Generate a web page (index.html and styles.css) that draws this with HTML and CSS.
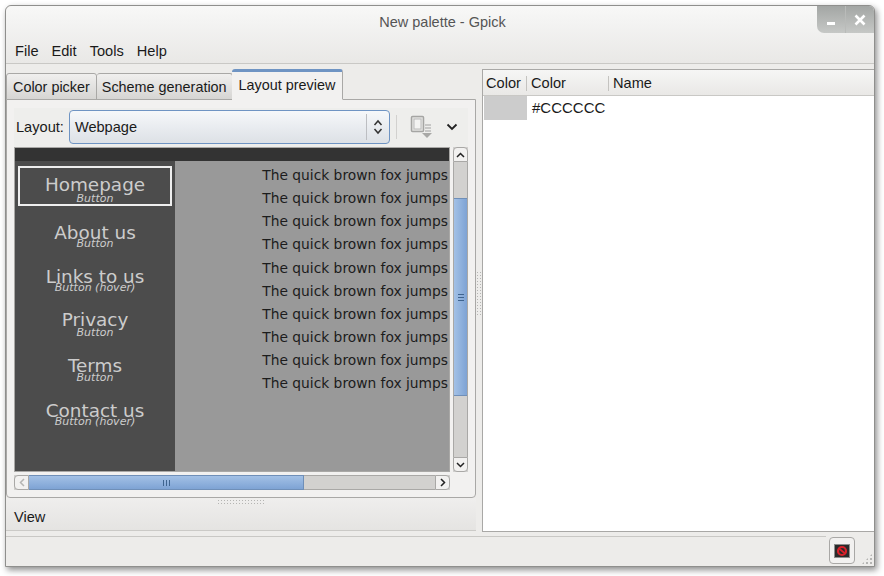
FILE: index.html
```html
<!DOCTYPE html>
<html>
<head>
    <meta charset="utf-8">
    <title>New palette - Gpick</title>
    <link rel="stylesheet" href="styles.css">
</head>
<body>
    <div class="window">
        <div class="chrome">
            <div class="titlebar">
                <span class="title">New palette - Gpick</span>
                <div class="winbtns">
                    <div class="winbtn"><svg width="14" height="12" viewBox="0 0 14 12"><rect x="3" y="8" width="8" height="3" fill="#fff"/></svg></div>
                    <div class="winbtn"><svg width="14" height="12" viewBox="0 0 14 12"><path d="M2.5 1.5 L11.5 10.5 M11.5 1.5 L2.5 10.5" stroke="#fff" stroke-width="2.6"/></svg></div>
                </div>
            </div>
            <div class="menubar">
                <span>File</span><span>Edit</span><span>Tools</span><span>Help</span>
            </div>
        </div>

        <div class="main">
            <div class="left">
                <div class="tabs">
                    <div class="tab tab-first">Color picker</div>
                    <div class="tab">Scheme generation</div>
                    <div class="tab tab-active">Layout preview</div>
                </div>
                <div class="notebook">
                    <div class="toolbar">
                        <span class="toolbar-label">Layout:</span>
                        <div class="combo">
                            <span class="combo-text">Webpage</span>
                            <div class="combo-arrows">
                                <svg width="10" height="16" viewBox="0 0 10 16"><path d="M1.5 6 L5 2 L8.5 6 M1.5 10 L5 14 L8.5 10" fill="none" stroke="#333" stroke-width="1.5"/></svg>
                            </div>
                        </div>
                        <div class="toolbar-sep"></div>
                        <svg class="export-icon" width="24" height="24" viewBox="0 0 24 24">
                            <rect x="1.5" y="1.5" width="12" height="15" rx="1" fill="#e4e4e2" stroke="#a5a5a3" stroke-width="1.5"/>
                            <rect x="4" y="4" width="7" height="10" fill="#f3f3f2" stroke="#bbb"/>
                            <path d="M15 10 H21 M15 13 H21 M15 16 H21" stroke="#a0a0a0" stroke-width="1.2"/>
                            <path d="M12 18 H22 L17 23 Z" fill="#a8a8a6"/>
                        </svg>
                        <svg class="more-icon" width="12" height="8" viewBox="0 0 12 8"><path d="M1.5 1.5 L6 6 L10.5 1.5" fill="none" stroke="#222" stroke-width="1.8"/></svg>
                    </div>
                    <div class="preview-grid">
                        <div class="preview">
                            <div class="preview-top"></div>
                            <div class="preview-body">
                                <div class="side">
                                    <div class="nav nav-home"><div class="nav-name">Homepage</div><div class="nav-sub">Button</div></div>
                                    <div class="nav nav-about"><div class="nav-name">About us</div><div class="nav-sub">Button</div></div>
                                    <div class="nav nav-links"><div class="nav-name">Links to us</div><div class="nav-sub">Button (hover)</div></div>
                                    <div class="nav nav-privacy"><div class="nav-name">Privacy</div><div class="nav-sub">Button</div></div>
                                    <div class="nav nav-terms"><div class="nav-name">Terms</div><div class="nav-sub">Button</div></div>
                                    <div class="nav nav-contact"><div class="nav-name">Contact us</div><div class="nav-sub">Button (hover)</div></div>
                                </div>
                                <div class="content">
                                    <div>The quick brown fox jumps</div>
                                    <div>The quick brown fox jumps</div>
                                    <div>The quick brown fox jumps</div>
                                    <div>The quick brown fox jumps</div>
                                    <div>The quick brown fox jumps</div>
                                    <div>The quick brown fox jumps</div>
                                    <div>The quick brown fox jumps</div>
                                    <div>The quick brown fox jumps</div>
                                    <div>The quick brown fox jumps</div>
                                    <div>The quick brown fox jumps</div>
                                </div>
                            </div>
                        </div>
                        <div class="vscroll">
                            <div class="sb-btn sb-up"><svg width="9" height="6" viewBox="0 0 9 6"><path d="M1 5 L4.5 1.5 L8 5" fill="none" stroke="#222" stroke-width="1.5"/></svg></div>
                            <div class="vtrack">
                                <div class="vthumb"><svg width="6" height="7" viewBox="0 0 6 7"><path d="M0 .5 H6 M0 3.5 H6 M0 6.5 H6" stroke="#3f648f"/></svg></div>
                            </div>
                            <div class="sb-btn sb-down"><svg width="9" height="6" viewBox="0 0 9 6"><path d="M1 1 L4.5 4.5 L8 1" fill="none" stroke="#222" stroke-width="1.5"/></svg></div>
                        </div>
                        <div class="hscroll">
                            <div class="sb-btn sb-left"><svg width="6" height="9" viewBox="0 0 6 9"><path d="M5 1 L1.5 4.5 L5 8" fill="none" stroke="#b5b5b3" stroke-width="1.5"/></svg></div>
                            <div class="hthumb"><svg width="7" height="6" viewBox="0 0 7 6"><path d="M.5 0 V6 M3.5 0 V6 M6.5 0 V6" stroke="#3f648f"/></svg></div>
                            <div class="htrack"></div>
                            <div class="sb-btn sb-right"><svg width="6" height="9" viewBox="0 0 6 9"><path d="M1 1 L4.5 4.5 L1 8" fill="none" stroke="#222" stroke-width="1.5"/></svg></div>
                        </div>
                    </div>
                </div>
                <div class="expander">
                    <div class="grip-h"></div>
                    <span>View</span>
                </div>
            </div>

            <div class="divider"><div class="grip-v"></div></div>

            <div class="right">
                <div class="list-head">
                    <div class="col col-a">Color</div>
                    <div class="col col-b">Color</div>
                    <div class="col col-c">Name</div>
                </div>
                <div class="list-row">
                    <div class="swatch"></div>
                    <div class="hex">#CCCCCC</div>
                </div>
            </div>
        </div>

        <div class="statusbar">
            <div class="status-line"></div>
            <div class="status-btn">
                <svg width="16" height="14" viewBox="0 0 16 14">
                    <rect x=".5" y=".5" width="15" height="13" fill="#2a2a2a" stroke="#8d8d8d"/>
                    <circle cx="8" cy="7" r="4" fill="none" stroke="#d8202a" stroke-width="2.2"/>
                    <path d="M5 4.5 L11 9.5" stroke="#d8202a" stroke-width="1.8"/>
                </svg>
            </div>
            <div class="resize-grip"></div>
        </div>
    </div>

    <!-- mouse pointer sitting over the palette list -->
    <svg class="cursor" width="16" height="22" viewBox="0 0 16 22">
        <path d="M1 1 L1 17 L5 13.5 L8 20 L10.5 19 L7.8 12.8 L13 12.5 Z" fill="#111" stroke="#eee" stroke-width=".8"/>
    </svg>
</body>
</html>
```

FILE: styles.css
```css
html,
body {
    margin: 0;
    height: 100%;
    background: #fff;
}
body {
    position: relative;
    width: 884px;
    height: 576px;
    overflow: hidden;
    font-family: "Liberation Sans", Arial, sans-serif;
    font-size: 14.6px;
    color: #1a1a1a;
}

.window {
    display: flex;
    flex-direction: column;
    box-sizing: border-box;
    width: 870px;
    height: 562px;
    margin: 5px 0 0 5px;
    background: #edecea;
    border: 1px solid #8f8f8d;
    border-radius: 6px 6px 0 0;
    box-shadow: 2px 3px 6px rgba(0, 0, 0, 0.45);
}

/* title and menu share one gradient */
.chrome {
    border-bottom: 1px solid #c9c8c5;
    background: linear-gradient(#f8f8f7, #f3f3f2 30%, #e9e8e6);
    border-radius: 6px 6px 0 0;
}
.titlebar {
    position: relative;
    box-sizing: border-box;
    height: 31px;
    padding-left: 5px;
    display: flex;
    align-items: center;
    justify-content: center;
}
.title {
    font-size: 14.5px;
    color: #555;
}
.winbtns {
    position: absolute;
    top: 0;
    right: 0;
    display: flex;
    height: 27px;
    background: linear-gradient(#a3a6a4, #c6c8c6);
    border-radius: 0 5px 0 7px;
}
.winbtn {
    width: 28px;
    display: flex;
    align-items: center;
    justify-content: center;
    border-left: 1px solid #b9bbb9;
}
.winbtn:first-child {
    border-left: 0;
}
.menubar {
    box-sizing: border-box;
    display: flex;
    gap: 13px;
    height: 26px;
    padding: 2px 9px 0;
    align-items: center;
}

.main {
    flex: 1;
    display: flex;
    min-height: 0;
}
.left {
    width: 470px;
    display: flex;
    flex-direction: column;
    padding-top: 5px;
}

.tabs {
    display: flex;
    align-items: flex-end;
    height: 31px;
    margin-bottom: -1px;
    position: relative;
    z-index: 1;
    font-size: 14.4px;
}
.tab {
    box-sizing: border-box;
    height: 27px;
    padding: 2px 5px 0;
    line-height: 22px;
    background: linear-gradient(#f0efee, #d6d5d3);
    border: 1px solid #a9a8a6;
    border-left: 0;
    border-radius: 3px 3px 0 0;
}
.tab-first {
    border-left: 1px solid #a9a8a6;
    padding-left: 6px;
    padding-right: 6px;
}
.tab-active {
    height: 31px;
    padding: 2px 7px 0;
    background: #f2f1f0;
    border-top: 3px solid #6f94c3;
    border-bottom: 1px solid #f2f1f0;
    border-color: #6f94c3 #a9a8a6 #f2f1f0 #a9a8a6;
    margin-left: -1px;
}

.notebook {
    box-sizing: border-box;
    height: 399px;
    padding: 8px 7px 6px 7px;
    background: #f2f1f0;
    border: 1px solid #a9a8a6;
    border-radius: 0 0 4px 4px;
}
.toolbar {
    display: flex;
    align-items: center;
    height: 39px;
    padding: 0 2px 1px;
    box-sizing: border-box;
    background: #eeeeec;
}
.toolbar-label {
    margin: 0 5px 0 0;
}
.combo {
    box-sizing: border-box;
    display: flex;
    align-items: center;
    width: 321px;
    height: 34px;
    background: linear-gradient(#f6f8fa, #e9ecf0 50%, #dde1e6);
    border: 1px solid #6f94c3;
    border-radius: 4px;
}
.combo-text {
    flex: 1;
    padding-left: 5px;
}
.combo-arrows {
    display: flex;
    align-items: center;
    justify-content: center;
    width: 22px;
    height: 26px;
    border-left: 1px solid #bcbec2;
}
.toolbar-sep {
    width: 1px;
    height: 24px;
    margin: 0 13px 0 6px;
    background: #d2d1cf;
}
.export-icon {
    margin-right: 12px;
}
.more-icon {
    flex: none;
}

.preview-grid {
    display: grid;
    grid-template-columns: 436px 15px;
    grid-template-rows: 325px 15px;
    column-gap: 3px;
    row-gap: 3px;
}
.preview {
    box-sizing: border-box;
    border: 1px solid #a9a8a6;
    display: flex;
    flex-direction: column;
    overflow: hidden;
}
.preview-top {
    height: 13px;
    background: #333;
}
.preview-body {
    flex: 1;
    display: flex;
    min-height: 0;
}
.side {
    width: 160px;
    background: #4c4c4c;
    display: flex;
    flex-direction: column;
    padding-top: 5px;
    font-family: "DejaVu Sans", sans-serif;
    color: #ccc;
}
.nav {
    box-sizing: border-box;
    width: 154px;
    margin-left: 3px;
    text-align: center;
}
/* the name and its style caption overlap, the preview draws them that way */
.nav-name {
    font-size: 18.4px;
    line-height: 22px;
}
.nav-sub {
    font-size: 11px;
    font-style: italic;
    line-height: 12px;
    margin-top: -4px;
}
.nav-home {
    height: 40px;
    padding-top: 5px;
    border: 2px solid #eee;
}
.nav-home .nav-name {
    margin-top: 1px;
}
.nav-home .nav-sub {
    margin-top: -3px;
}
.nav-about { padding-top: 15px; height: 44px; }
.nav-about .nav-name { margin-top: 1px; }
.nav-about .nav-sub { margin-top: -6px; }
.nav-links { padding-top: 15px; height: 44px; }
.nav-links .nav-name { margin-top: 1px; }
.nav-links .nav-sub { margin-top: -6px; }
.nav-privacy { padding-top: 14px; height: 43px; }
.nav-privacy .nav-name { margin-top: 1px; }
.nav-terms { padding-top: 16px; height: 46px; }
.nav-terms .nav-name { margin-top: 2px; }
.nav-terms .nav-sub { margin-top: -5px; }
.nav-contact { padding-top: 15px; height: 45px; }
.nav-contact .nav-name { margin-top: 2px; }
.nav-contact .nav-sub { margin-top: -6px; }

.content {
    flex: 1;
    background: #999;
    color: #1c1c1c;
    font-family: "DejaVu Sans", sans-serif;
    font-size: 13.8px;
    line-height: 23.15px;
    text-align: right;
    padding: 3px 1px 0 0;
    white-space: nowrap;
    overflow: hidden;
}

.vscroll {
    display: flex;
    flex-direction: column;
    background: #d2d1cf;
    border: 0;
}
.vtrack {
    flex: 1;
    padding-top: 36px;
    border-left: 1px solid #a9a8a6;
    border-right: 1px solid #a9a8a6;
}
.vthumb {
    height: 198px;
    display: flex;
    align-items: center;
    justify-content: center;
    background: linear-gradient(90deg, #a3c1e6, #7ea3d4);
    border-top: 1px solid #6f8fb8;
    border-bottom: 1px solid #6f8fb8;
    box-sizing: border-box;
}
.hscroll {
    display: flex;
    grid-column: 1;
    background: #d2d1cf;
}
.hthumb {
    box-sizing: border-box;
    width: 275px;
    display: flex;
    align-items: center;
    justify-content: center;
    background: linear-gradient(#a3c1e6, #7ea3d4);
    border-top: 1px solid #6f8fb8;
    border-bottom: 1px solid #6f8fb8;
    border-right: 1px solid #6f8fb8;
}
.htrack {
    flex: 1;
    border-top: 1px solid #a9a8a6;
    border-bottom: 1px solid #a9a8a6;
}
.sb-btn {
    box-sizing: border-box;
    flex: none;
    width: 15px;
    height: 15px;
    display: flex;
    align-items: center;
    justify-content: center;
    background: #f2f1f0;
    border: 1px solid #a9a8a6;
}
.sb-up { border-radius: 4px 4px 0 0; }
.sb-down { border-radius: 0 0 4px 4px; }
.sb-left { border-radius: 4px 0 0 4px; }
.sb-right { border-radius: 0 4px 4px 0; }

.expander {
    position: relative;
    flex: 1;
    display: flex;
    align-items: center;
    padding: 6px 0 0 8px;
    background: linear-gradient(#efeeed, #e5e4e2);
    border-bottom: 1px solid #cbcac7;
}
.grip-h {
    position: absolute;
    top: 1px;
    left: 211px;
    width: 48px;
    height: 5px;
    background-image: radial-gradient(#b5b5b3 0.7px, transparent 0.8px);
    background-size: 3px 3px;
}

.divider {
    position: relative;
    width: 6px;
}
.grip-v {
    position: absolute;
    top: 207px;
    left: 0;
    width: 6px;
    height: 46px;
    background-image: radial-gradient(#b5b5b3 0.7px, transparent 0.8px);
    background-size: 3px 3px;
}

.right {
    position: relative;
    z-index: 1;
    box-sizing: border-box;
    flex: 1;
    margin-top: 5px;
    margin-bottom: -1px;
    background: #fff;
    border: 1px solid #a9a8a6;
    border-right: 0;
}
.list-head {
    box-sizing: border-box;
    display: flex;
    height: 26px;
    padding-top: 1px;
    line-height: 24px;
    background: linear-gradient(#f6f6f5, #e9e8e6);
    border-bottom: 1px solid #c9c8c5;
}
.col {
    box-sizing: border-box;
    padding-left: 4px;
    position: relative;
}
.col-a { width: 44px; padding-left: 3px; }
.col-b { width: 82px; }
.col-c { flex: 1; }
.col-a::after,
.col-b::after {
    content: "";
    position: absolute;
    top: 5px;
    right: 0;
    width: 1px;
    height: 15px;
    background: #c4c3c0;
}
.list-row {
    display: flex;
    height: 24px;
    line-height: 24px;
}
.swatch {
    width: 43px;
    margin-left: 1px;
    background: #ccc;
}
.hex {
    padding-left: 5px;
    font-size: 15px;
}

.statusbar {
    position: relative;
    height: 35px;
    flex: none;
    display: flex;
    justify-content: flex-end;
    align-items: flex-start;
    background: #edecea;
}
.status-line {
    position: absolute;
    top: 5px;
    left: 0;
    width: 820px;
    height: 1px;
    background: #c9c8c5;
}
.status-btn {
    box-sizing: border-box;
    width: 26px;
    height: 27px;
    margin: 6px 19px 0 0;
    display: flex;
    align-items: center;
    justify-content: center;
    background: #f2f1f0;
    border: 1px solid #a9a8a6;
    border-radius: 4px;
}
.resize-grip {
    position: absolute;
    right: 1px;
    bottom: 1px;
    width: 12px;
    height: 12px;
    background-image: radial-gradient(#b5b5b3 0.8px, transparent 0.9px);
    background-size: 4px 4px;
    clip-path: polygon(100% 0, 100% 100%, 0 100%);
}

.cursor {
    position: absolute;
    left: 512px;
    top: 381px;
}
```
